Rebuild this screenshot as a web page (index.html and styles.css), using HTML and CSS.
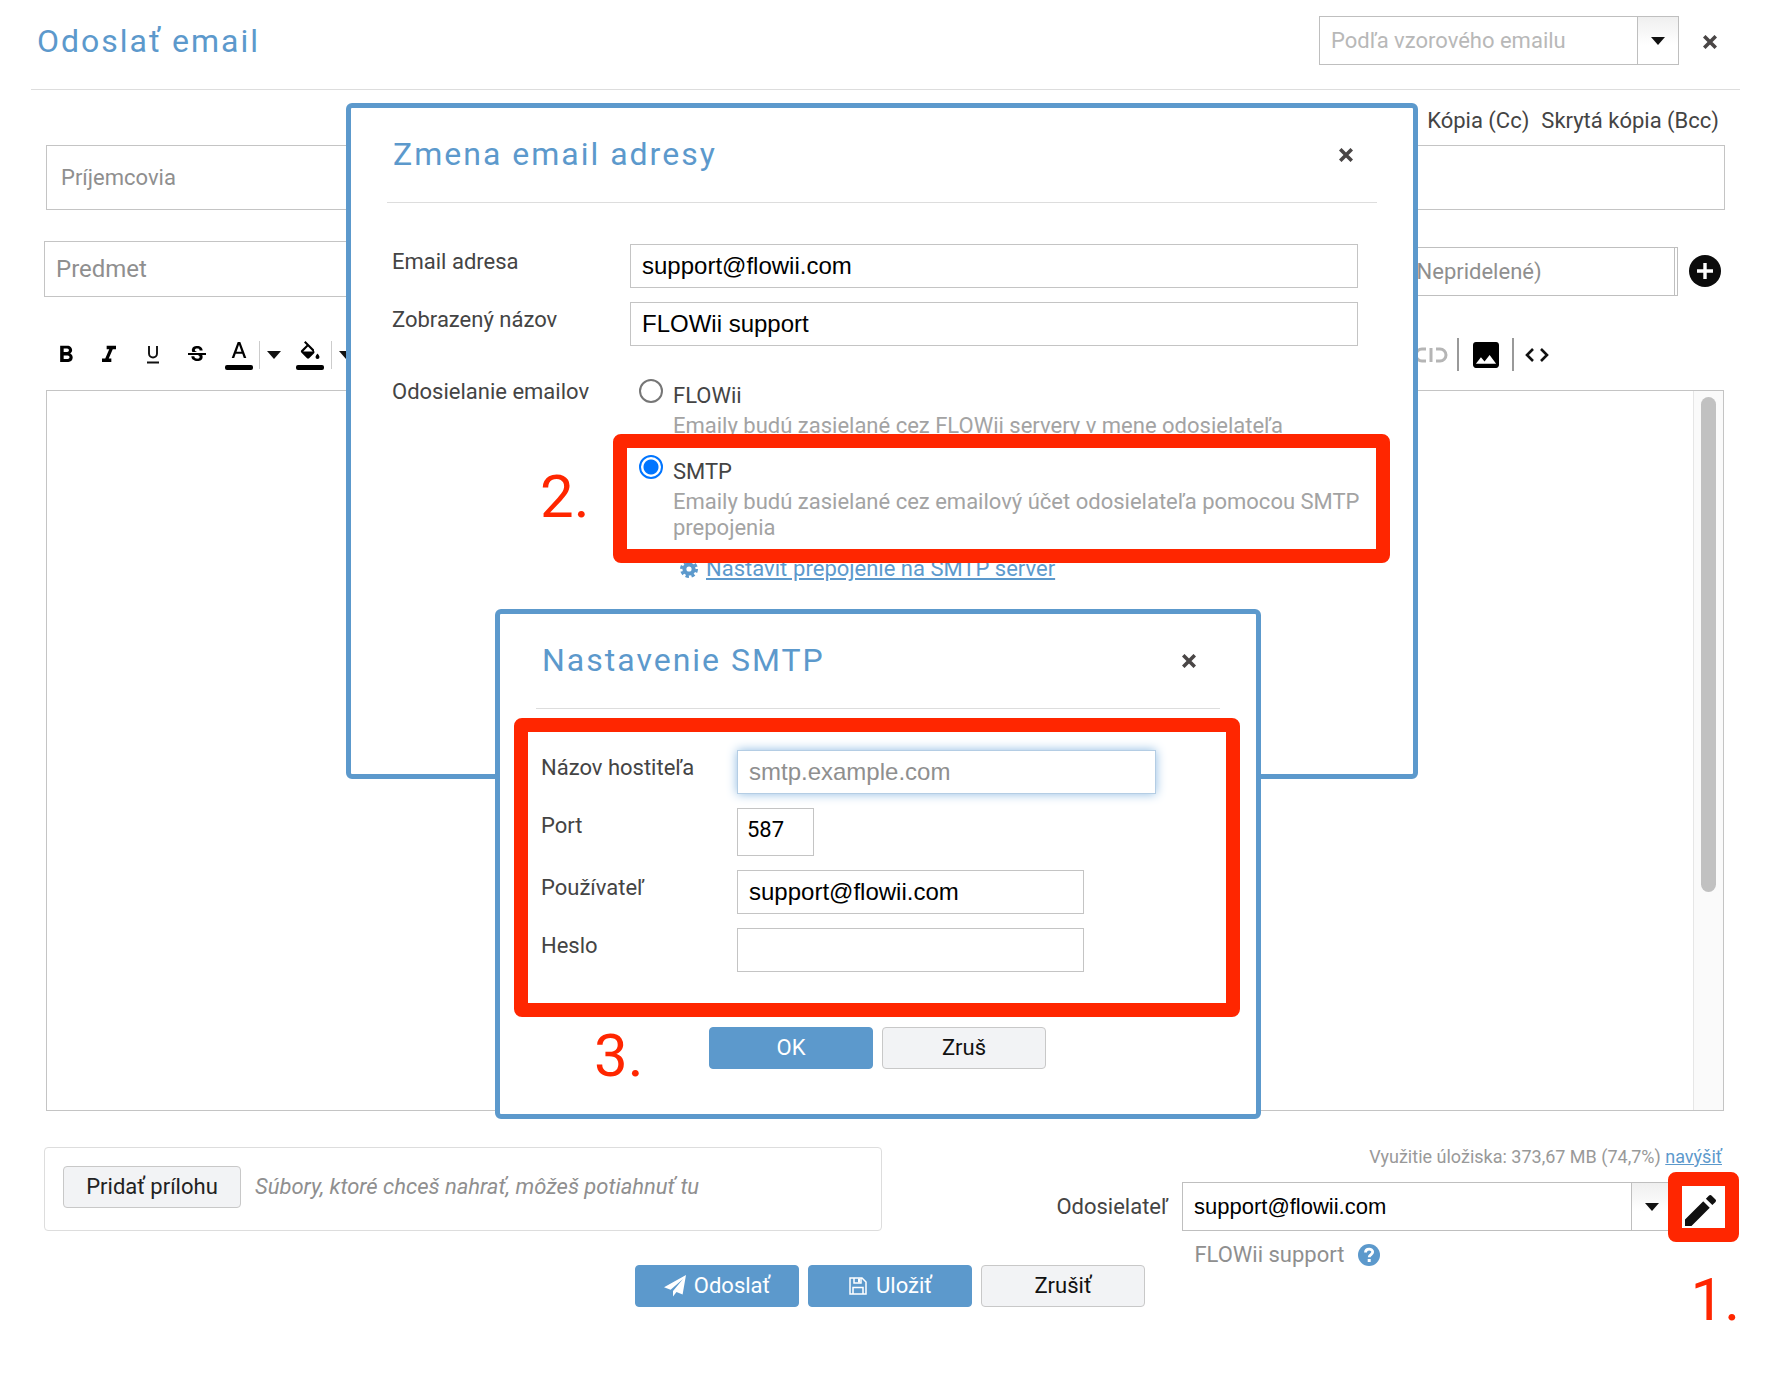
FILE: index.html
```html
<!DOCTYPE html>
<html lang="sk">
<head>
<meta charset="utf-8">
<title>Odoslať email</title>
<link rel="stylesheet" href="styles.css">
</head>
<body>
<svg width="0" height="0" class="sprite" aria-hidden="true">
  <symbol id="x" viewBox="0 0 14 14"><path d="M2.5 2.5l9 9M11.500 2.500l-9 9" stroke="currentColor" stroke-width="3.6" stroke-linecap="square"/></symbol>
  <symbol id="caret" viewBox="0 0 14 8"><path d="M0 0h14L7 8z" fill="currentColor"/></symbol>
</svg>

<main class="compose">
  <header class="compose-head">
    <h1 class="title">Odoslať email</h1>
    <div class="combo combo-template">
      <input class="combo-text" type="text" placeholder="Podľa vzorového emailu" aria-label="Podľa vzorového emailu">
      <button class="combo-btn" type="button" aria-label="Rozbaliť"><svg class="caret"><use href="#caret"/></svg></button>
    </div>
    <button class="close" type="button" aria-label="Zavrieť"><svg class="x"><use href="#x"/></svg></button>
  </header>

  <div class="copies">
    <a href="#cc">Kópia (Cc)</a>
    <a href="#bcc">Skrytá kópia (Bcc)</a>
  </div>
  <input class="recipients" type="text" placeholder="Príjemcovia" aria-label="Príjemcovia">

  <div class="subject-row">
    <input class="subject" type="text" placeholder="Predmet" aria-label="Predmet">
    <div class="assign"><input class="assign-text" type="text" placeholder="(Nepridelené)" aria-label="Pridelenie"></div>
    <button class="plus" type="button" aria-label="Pridať">
      <svg width="32" height="32" viewBox="0 0 32 32"><circle cx="16" cy="16" r="16" fill="#0b0b0b"/><path d="M16 8v16M8 16h16" stroke="#fff" stroke-width="3.4"/></svg>
    </button>
  </div>

  <div class="toolbar">
    <div class="tools">
      <button class="tool" type="button" aria-label="Tučné"><svg width="28" height="28" viewBox="0 0 24 24"><path d="M15.600 10.790c.97-.67 1.650-1.770 1.650-2.790 0-2.260-1.750-4-4-4H7v14h7.040c2.090 0 3.710-1.700 3.710-3.790 0-1.520-.86-2.820-2.150-3.420zM10 6.500h3c.83 0 1.500.67 1.500 1.500s-.67 1.500-1.500 1.500h-3v-3zm3.500 9H10v-3h3.500c.83 0 1.500.67 1.500 1.500s-.67 1.500-1.500 1.500z"/></svg></button>
      <button class="tool" type="button" aria-label="Kurzíva"><svg width="28" height="28" viewBox="0 0 24 24"><path d="M10 4v3h2.210l-3.420 8H6v3h8v-3h-2.210l3.420-8H18V4z"/></svg></button>
      <button class="tool tool-wide" type="button" aria-label="Podčiarknuté"><svg width="14" height="18" viewBox="0 0 14 18"><path d="M3 0v7.500a4 4 0 0 0 8 0V0M1 16.500h12" fill="none" stroke="#111" stroke-width="1.900"/></svg></button>
      <button class="tool" type="button" aria-label="Prečiarknuté"><svg width="24" height="24" viewBox="0 0 24 24"><path d="M7.240 8.750c-.26-.48-.39-1.030-.39-1.670 0-.61.13-1.160.4-1.670.26-.5.63-.93 1.110-1.290.48-.35 1.050-.63 1.700-.83.66-.19 1.390-.29 2.180-.29.81 0 1.540.11 2.210.34.66.22 1.230.54 1.690.94.47.4.83.88 1.080 1.430s.38 1.150.38 1.810h-3.010c0-.31-.05-.59-.15-.85-.09-.27-.24-.49-.44-.68-.2-.19-.45-.33-.75-.44-.3-.1-.66-.16-1.060-.16-.39 0-.74.04-1.030.13s-.53.21-.72.36c-.19.16-.34.34-.44.55-.1.21-.15.43-.15.66 0 .48.25.88.74 1.210.38.25.77.48 1.410.7H7.390c-.05-.08-.11-.17-.15-.25zM21 12v-2H3v2h9.620c.18.070.4.14.55.2.37.170.66.34.87.510s.35.36.43.570c.070.2.11.43.11.690 0 .23-.05.45-.14.660-.09.2-.23.38-.42.530-.19.150-.42.260-.71.350-.29.080-.63.130-1.010.130-.43 0-.83-.04-1.180-.13s-.66-.23-.91-.42c-.25-.19-.45-.44-.59-.75s-.25-.76-.25-1.210H6.400c0 .55.08 1.130.24 1.580s.37.850.65 1.210c.28.350.6.660.98.920.37.260.78.480 1.220.650.44.170.9.300 1.380.390.48.080.96.130 1.440.130.8 0 1.530-.09 2.180-.28s1.210-.45 1.670-.79c.46-.34.82-.77 1.070-1.270s.38-1.070.38-1.710c0-.6-.1-1.140-.31-1.610-.05-.11-.11-.23-.17-.33H21z"/></svg></button>
      <button class="tool tool-color" type="button" aria-label="Farba písma"><svg width="30" height="32" viewBox="0 0 30 32"><path d="M13.700 3h2.600l6 16h-2.500l-1.500-4.200h-6.600L10.200 19H7.700zM12.500 12.700h5L15 5.700z"/><rect y="26" x="1" width="28" height="5" rx="2"/></svg></button>
      <span class="tool-sep"></span>
      <button class="tool tool-caret" type="button" aria-label="Výber farby písma"><svg class="caret"><use href="#caret"/></svg></button>
      <button class="tool" type="button" aria-label="Farba pozadia"><svg width="30" height="32" viewBox="0 0 30 32"><path d="M19 10.500L10.500 2 9 3.400l2.600 2.600-5.300 5.300c-.6.600-.6 1.500 0 2.100l5.700 5.800c.6.600 1.500.6 2.100 0l5-5c.6-.6.6-1.500-.1-2.100zM8.200 12.500L13 7.600l4.800 4.900zM22.500 14.500s-2 2.300-2 3.600a2 2 0 0 0 4 0c0-1.300-2-3.600-2-3.600z"/><rect y="26" x="1" width="28" height="5" rx="2"/></svg></button>
      <span class="tool-sep"></span>
      <button class="tool tool-caret" type="button" aria-label="Výber farby pozadia"><svg class="caret"><use href="#caret"/></svg></button>
    </div>
    <div class="tools tools-end">
      <button class="tool" type="button" aria-label="Zrušiť odkaz" disabled><svg width="34" height="16" viewBox="0 0 34 16"><path d="M12 2H8a6 6 0 0 0 0 12h4M17 1v14M22 2h4a6 6 0 0 1 0 12h-4" fill="none" stroke="#b5b5b5" stroke-width="3"/></svg></button>
      <span class="tool-bar"></span>
      <button class="tool" type="button" aria-label="Obrázok"><svg width="26" height="26" viewBox="3 3 18 18"><path d="M21 19V5c0-1.100-.9-2-2-2H5c-1.100 0-2 .9-2 2v14c0 1.100.9 2 2 2h14c1.100 0 2-.9 2-2zM8.500 13.500l2.500 3.010L14.500 12l4.500 6H5l3.500-4.500z"/></svg></button>
      <span class="tool-bar"></span>
      <button class="tool tool-code" type="button" aria-label="Zdrojový kód"><svg width="24" height="14" viewBox="0 0 24 14"><path d="M8 1L2 7l6 6M16 1l6 6-6 6" fill="none" stroke="#111" stroke-width="2.600"/></svg></button>
    </div>
  </div>

  <div class="editor"><div class="track"><div class="thumb"></div></div></div>

  <section class="bottom">
    <div class="attach">
      <button class="btn btn-attach" type="button">Pridať prílohu</button>
      <em class="hint">Súbory, ktoré chceš nahrať, môžeš potiahnuť tu</em>
    </div>
    <div class="sender">
      <p class="usage">Využitie úložiska: 373,67 MB (74,7%) <a class="link" href="#more">navýšiť</a></p>
      <div class="sender-row">
        <label for="from">Odosielateľ</label>
        <div class="combo combo-from">
          <input class="combo-text" id="from" type="text" value="support@flowii.com">
          <button class="combo-btn" type="button" aria-label="Rozbaliť"><svg class="caret"><use href="#caret"/></svg></button>
        </div>
        <button class="pencil" type="button" aria-label="Upraviť">
          <svg width="31" height="31" viewBox="3 3 18 18"><path d="M3 17.250V21h3.750L17.810 9.940l-3.750-3.750L3 17.250zM20.710 7.040c.39-.39.39-1.020 0-1.410l-2.340-2.340c-.39-.39-1.020-.39-1.410 0l-1.830 1.830 3.750 3.750 1.830-1.830z" fill="#111"/><path d="M13.200 5.600l5.200 5.200" stroke="#fff" stroke-width="1"/></svg>
          <span class="mark mark-pencil"></span>
        </button>
      </div>
      <p class="sender-name">FLOWii support
        <svg width="22" height="22" viewBox="0 0 22 22"><circle cx="11" cy="11" r="11" fill="#5c99cc"/><path d="M7.500 8.600c0-4.600 7.200-4.400 7.200-.5 0 2.500-3.500 2.400-3.500 5.200" fill="none" stroke="#fff" stroke-width="2.800"/><path d="M9.700 15h3v3h-3z" fill="#fff"/></svg>
      </p>
      <span class="step step-1">1.</span>
    </div>
  </section>

  <footer class="actions">
    <button class="btn btn-primary" type="button"><svg width="22" height="22" viewBox="0 0 22 22"><path d="M22 0l-3.400 19.600-6.100-2.500L9 21.500v-5.600L19 4 6.600 14.700 0 12.300z" fill="#fff"/></svg>Odoslať</button>
    <button class="btn btn-primary" type="button"><svg width="20" height="20" viewBox="0 0 20 20"><path d="M2 2h12l4 4v12H2zM6 2v5h7V2M5 18v-6.500h10V18" fill="none" stroke="#fff" stroke-width="1.500"/><path d="M10 2.500h2v4h-2z" fill="#fff"/></svg>Uložiť</button>
    <button class="btn" type="button">Zrušiť</button>
  </footer>
</main>

<section class="dialog dialog-email" role="dialog" aria-labelledby="t1">
  <header class="dialog-head">
    <h2 class="title" id="t1">Zmena email adresy</h2>
    <button class="close" type="button" aria-label="Zavrieť"><svg class="x"><use href="#x"/></svg></button>
  </header>
  <div class="email-form">
    <label for="addr">Email adresa</label>
    <input class="field" id="addr" type="text" value="support@flowii.com">
    <label for="name">Zobrazený názov</label>
    <input class="field" id="name" type="text" value="FLOWii support">
    <span class="via-label">Odosielanie emailov</span>
    <div class="via">
      <div class="option">
        <input class="radio" type="radio" name="via" id="via-flowii">
        <div><label for="via-flowii">FLOWii</label><p class="note">Emaily budú zasielané cez FLOWii servery v mene odosielateľa</p></div>
      </div>
      <div class="option option-smtp">
        <input class="radio" type="radio" name="via" id="via-smtp" checked>
        <div><label for="via-smtp">SMTP</label><p class="note">Emaily budú zasielané cez emailový účet odosielateľa pomocou SMTP prepojenia</p></div>
        <span class="mark mark-smtp"></span>
        <span class="step step-2">2.</span>
      </div>
      <div class="setup">
        <svg width="18" height="18" viewBox="0 0 18 18"><circle cx="9" cy="9" r="4.600" fill="none" stroke="#5c99cc" stroke-width="4"/><circle cx="9" cy="9" r="7.600" fill="none" stroke="#5c99cc" stroke-width="2.800" stroke-dasharray="3.400 2.570"/></svg>
        <a class="link" href="#smtp">Nastaviť prepojenie na SMTP server</a>
      </div>
    </div>
  </div>
</section>

<section class="dialog dialog-smtp" role="dialog" aria-labelledby="t2">
  <header class="dialog-head">
    <h2 class="title" id="t2">Nastavenie SMTP</h2>
    <button class="close" type="button" aria-label="Zavrieť"><svg class="x"><use href="#x"/></svg></button>
  </header>
  <div class="smtp-form">
    <label for="host">Názov hostiteľa</label>
    <input class="field field-focus" id="host" type="text" placeholder="smtp.example.com">
    <label for="port">Port</label>
    <input class="field field-port" id="port" type="text" value="587">
    <label for="user">Používateľ</label>
    <input class="field field-short" id="user" type="text" value="support@flowii.com">
    <label for="pass">Heslo</label>
    <input class="field field-short" id="pass" type="password">
    <span class="mark mark-form"></span>
  </div>
  <footer class="dialog-actions">
    <button class="btn btn-primary" type="button">OK</button>
    <button class="btn" type="button">Zruš</button>
    <span class="step step-3">3.</span>
  </footer>
</section>
</body>
</html>
```
FILE: styles.css
```css
* { box-sizing: border-box; }

body {
  position: relative;
  min-height: 100vh;
  margin: 0;
  background: #fff;
  color: #444;
  font: 22px/26px Roboto, "Open Sans", sans-serif;
}

h1, h2, p { margin: 0; }
button, input { font: inherit; color: inherit; margin: 0; }
button { padding: 0; border: 0; background: none; }
svg { display: block; }
.sprite { position: absolute; }

input::placeholder { color: #8f8f8f; opacity: 1; }
input:focus { outline: none; }

.title {
  flex: 1;
  color: #5c99cc;
  font-size: 32px;
  line-height: 40px;
  font-weight: 400;
  letter-spacing: 2px;
}

.link { color: #5c99cc; }
.x { width: 14px; height: 14px; }
.caret { width: 14px; height: 8px; color: #111; }
.close { padding: 10px 8px 8px; color: #4a4646; }

/* compose window */
.compose { padding: 0 30px 80px 31px; }

.compose-head {
  display: flex;
  align-items: center;
  gap: 16px;
  height: 90px;
  padding: 0 15px 8px 6px;
  border-bottom: 1px solid #ddd;
}

.combo {
  display: flex;
  height: 49px;
  border: 1px solid #bfbfbf;
  background: #fff;
}
.combo-text { flex: 1; min-width: 0; padding: 0 11px; border: 0; background: none; }
.combo-btn {
  display: flex;
  align-items: center;
  justify-content: center;
  width: 41px;
  border-left: 1px solid #bfbfbf;
  background: linear-gradient(#efefef, #fff 60%);
}
.combo-template { width: 360px; }
.combo-template .combo-text::placeholder { color: #b8b8b8; }

.copies {
  display: flex;
  justify-content: flex-end;
  gap: 12px;
  padding: 18px 21px 11px 0;
}
.copies a { color: #444; text-decoration: none; }

.recipients {
  display: block;
  width: calc(100% - 30px);
  height: 65px;
  margin-left: 15px;
  padding: 0 14px;
  border: 1px solid #c4c4c4;
}

.subject-row {
  display: flex;
  align-items: center;
  gap: 11px;
  margin: 31px 19px 0 13px;
}
.subject { flex: 1; height: 56px; padding: 0 11px; border: 1px solid #c4c4c4; font-size: 24px; }
.assign { width: 280px; height: 49px; margin-top: 4px; padding-right: 2px; border: 1px solid #bfbfbf; }
.assign-text { width: 100%; height: 100%; padding: 0 10px; border: 0; border-right: 1px solid #bfbfbf; }
.plus { margin-top: 4px; }

.toolbar {
  display: flex;
  justify-content: space-between;
  height: 93px;
  padding: 0 185px 0 13px;
}
.tools { display: flex; align-items: center; padding-top: 22px; }
.tool { display: flex; justify-content: center; width: 43px; }
.tool-wide { width: 45px; }
.tool-color { width: 41px; }
.tool-sep { width: 1px; height: 28px; background: #ccc; }
.tool-caret { width: 28px; }
.tool-code { width: 36px; }
.tool-bar { width: 2px; height: 33px; margin: 0 5px; background: #999; }

.editor {
  display: flex;
  justify-content: flex-end;
  height: 721px;
  margin: 0 16px 0 15px;
  border: 1px solid #c4c4c4;
}
.track { width: 30px; padding: 6px 7px; border-left: 1px solid #e6e6e6; background: #fafafa; }
.thumb { height: 495px; border-radius: 8px; background: #c1c1c1; }

.bottom { display: flex; justify-content: space-between; margin: 36px 0 0 13px; }
.attach {
  display: flex;
  align-items: flex-start;
  gap: 14px;
  width: 838px;
  height: 84px;
  padding: 18px;
  border: 1px solid #ddd;
  border-radius: 4px;
}
.hint { padding-top: 8px; color: #8f8f8f; }

.sender { position: relative; height: 118px; }
.usage { padding-right: 18px; color: #999; font-size: 18px; line-height: 20px; text-align: right; }
.sender-row { display: flex; align-items: center; gap: 6px; padding: 15px 24px 0 0; }
.sender-row label { padding-right: 8px; }
.combo-from { width: 497px; }
.combo-from .combo-text { color: #000; font: 22px "Liberation Sans", sans-serif; }
.combo-from .combo-btn { width: 47px; padding-right: 6px; }
.pencil { position: relative; padding-top: 7px; }
.sender-name { display: flex; align-items: center; gap: 14px; padding: 11px 0 0 138px; color: #8f8f8f; }

.btn {
  display: flex;
  align-items: center;
  justify-content: center;
  gap: 8px;
  width: 164px;
  height: 42px;
  border: 1px solid #c8c8c8;
  border-radius: 4px;
  background: #f2f3f5;
  color: #111;
}
.btn-primary { border-color: #5c99cc; background: #5c99cc; color: #fff; }
.btn-attach { width: 178px; color: #222; }

.actions { display: flex; justify-content: center; gap: 9px; padding-left: 9px; }

/* dialogs */
.dialog {
  position: absolute;
  border: 5px solid #5c99cc;
  border-radius: 6px;
  background: #fff;
}
.dialog-email { top: 103px; left: calc(50% - 539px); width: 1072px; height: 676px; padding: 0 36px; }
.dialog-smtp { top: 609px; left: calc(50% - 390px); width: 766px; height: 510px; padding: 0 36px; }
.dialog-head {
  display: flex;
  align-items: center;
  height: 95px;
  padding: 0 16px 2px 6px;
  border-bottom: 1px solid #ddd;
}

.field {
  width: 100%;
  height: 44px;
  padding: 0 11px;
  border: 1px solid #c4c4c4;
  background: #fff;
  color: #000;
  font: 24px "Liberation Sans", sans-serif;
}

.email-form {
  display: grid;
  grid-template-columns: 238px 1fr;
  row-gap: 14px;
  padding: 41px 19px 0 5px;
}
.email-form > label { padding-top: 5px; }
.via-label { padding-top: 19px; }
.via { padding-top: 23px; }
.option { position: relative; display: flex; gap: 10px; padding-left: 9px; margin-right: -10px; }
.option-smtp { margin-top: 20px; }
.radio {
  flex: none;
  appearance: none;
  width: 24px;
  height: 24px;
  margin-top: -4px;
  border: 2px solid #767676;
  border-radius: 50%;
}
.radio:checked { border-color: #0075ff; background: radial-gradient(#0075ff 7px, #fff 8px); }
.note { padding-top: 4px; color: #a3a3a3; }
.setup { display: flex; align-items: center; gap: 8px; padding: 15px 0 0 50px; }

.smtp-form {
  position: relative;
  display: grid;
  grid-template-columns: 196px 1fr;
  row-gap: 14px;
  padding: 41px 64px 0 5px;
}
.smtp-form label { padding-top: 5px; }
.field-focus { border-color: #b4cde4; box-shadow: 0 0 10px #8fbbe2; }
.field-port { width: 77px; height: 48px; padding: 0 9px 6px; font-family: Roboto, sans-serif; font-size: 22px; }
.field-short { width: 347px; }

.dialog-actions { position: relative; display: flex; gap: 9px; padding: 55px 0 0 173px; }

/* numbered guide marks laid over the form */
.mark { position: absolute; border: 14px solid #ff2600; border-radius: 8px; pointer-events: none; }
.mark-pencil { inset: -16px -23px -16px -17px; }
.mark-smtp { inset: -25px -22px -22px -17px; }
.mark-form { inset: 9px -20px -45px -22px; }

.step {
  position: absolute;
  z-index: 1;
  color: #ff2600;
  font-size: 60px;
  line-height: 60px;
  white-space: nowrap;
}
.step-1 { right: 0; bottom: -65px; }
.step-2 { top: 8px; left: -90px; }
.step-3 { top: 54px; left: 58px; }
```
